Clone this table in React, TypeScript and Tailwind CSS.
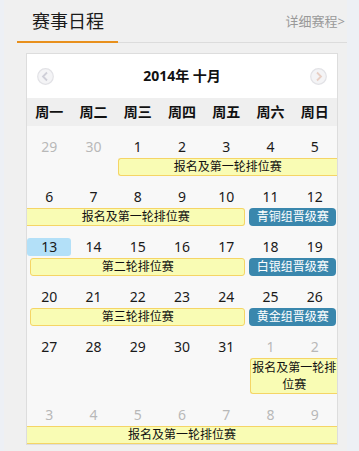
import React from 'react';

type Day = { n: number; other?: boolean; today?: boolean };
type Ev = { label: string; kind: 'yellow' | 'blue'; cls: string; tall?: boolean };

const weekdays = ['周一', '周二', '周三', '周四', '周五', '周六', '周日'];

const d = (n: number, other = false, today = false): Day => ({ n, other, today });

const weeks: { days: Day[]; events: Ev[] }[] = [
  {
    days: [d(29, true), d(30, true), d(1), d(2), d(3), d(4), d(5)],
    events: [
      { label: '报名及第一轮排位赛', kind: 'yellow', cls: 'col-start-3 col-span-5 ml-[2px] rounded-l-[3px] border-r-0' }
    ]
  },
  {
    days: [d(6), d(7), d(8), d(9), d(10), d(11), d(12)],
    events: [
      { label: '报名及第一轮排位赛', kind: 'yellow', cls: 'col-start-1 col-span-5 mr-[3px] rounded-r-[3px] border-l-0' },
      { label: '青铜组晋级赛', kind: 'blue', cls: 'col-start-6 col-span-2 ml-[1px] mr-[1px] rounded-[4px]' }
    ]
  },
  {
    days: [d(13, false, true), d(14), d(15), d(16), d(17), d(18), d(19)],
    events: [
      { label: '第二轮排位赛', kind: 'yellow', cls: 'col-start-1 col-span-5 ml-[3px] mr-[3px] rounded-[3px]' },
      { label: '白银组晋级赛', kind: 'blue', cls: 'col-start-6 col-span-2 ml-[1px] mr-[1px] rounded-[4px]' }
    ]
  },
  {
    days: [d(20), d(21), d(22), d(23), d(24), d(25), d(26)],
    events: [
      { label: '第三轮排位赛', kind: 'yellow', cls: 'col-start-1 col-span-5 ml-[3px] mr-[3px] rounded-[3px]' },
      { label: '黄金组晋级赛', kind: 'blue', cls: 'col-start-6 col-span-2 ml-[1px] mr-[1px] rounded-[4px]' }
    ]
  },
  {
    days: [d(27), d(28), d(29), d(30), d(31), d(1, true), d(2, true)],
    events: [
      { label: '报名及第一轮排位赛', kind: 'yellow', cls: 'col-start-6 col-span-2 ml-[2px] rounded-l-[3px] border-r-0', tall: true }
    ]
  },
  {
    days: [d(3, true), d(4, true), d(5, true), d(6, true), d(7, true), d(8, true), d(9, true)],
    events: [
      { label: '报名及第一轮排位赛', kind: 'yellow', cls: 'col-start-1 col-span-7 border-l-0 border-r-0' }
    ]
  }
];

function CircleArrow({ dir }: { dir: 'left' | 'right' }) {
  return (
    <svg width="17" height="17" viewBox="0 0 17 17">
      <circle cx="8.5" cy="8.5" r="7.8" fill="#f4f4f6" stroke="#e2e2e6" strokeWidth="1.2" />
      {dir === 'left' ? (
        <path d="M10 4.5 L6 8.5 L10 12.5" fill="none" stroke="#cfcfd8" strokeWidth="1.8" />
      ) : (
        <path d="M7 4.5 L11 8.5 L7 12.5" fill="none" stroke="#e8cfc4" strokeWidth="1.8" />
      )}
    </svg>
  );
}

export default function App() {
  return (
    <div
      className="h-[451px] w-[359px] overflow-hidden bg-[#edf0f5]"
      style={{ fontFamily: '"Noto Sans", "Noto Sans CJK SC", sans-serif' }}
    >
      <div className="ml-[4px] h-[451px] w-[343px] bg-[#f0f0f0]">
        <div className="ml-[13px] flex h-[43px] items-stretch justify-between border-b border-[#dcdcdc]">
          <div className="-mb-px flex w-[101px] items-center border-b-2 border-[#e8901c] pl-[15px] text-[18px] leading-[24px] text-[#1a1a1a]">
            赛事日程
          </div>
          <div className="flex items-center pr-[2px] text-[13px] leading-[18px] text-[#999]">详细赛程&gt;</div>
        </div>

        <div className="ml-[22px] mt-[10px] w-[312px] border border-[#dddddd]">
          <div className="flex h-[44px] items-center justify-between bg-white px-[10px]">
            <CircleArrow dir="left" />
            <div className="text-[14px] font-bold leading-[18px] text-[#111]">2014年 十月</div>
            <CircleArrow dir="right" />
          </div>

          <div className="grid h-[28px] grid-cols-7 items-center bg-[#efefef]">
            {weekdays.map((w) => (
              <div key={w} className="text-center text-[14px] font-bold leading-[18px] text-[#111]">
                {w}
              </div>
            ))}
          </div>

          <div className="bg-[#f8f8f8]">
            {weeks.map((week, i) => (
              <div key={i} className="pt-[12px]">
                <div className="grid grid-cols-7">
                  {week.days.map((day, j) => (
                    <div
                      key={j}
                      className={
                        'h-[18px] text-center text-[14px] leading-[18px] ' +
                        (day.today ? 'rounded-[3px] bg-[#b3e0f8] ' : '') +
                        (day.other ? 'text-[#b8b8b8]' : 'text-[#1a1a1a]')
                      }
                    >
                      {day.n}
                    </div>
                  ))}
                </div>
                <div className="mt-[2px] grid grid-cols-7">
                  {week.events.map((ev, k) => (
                    <div
                      key={k}
                      className={
                        'text-center text-[12px] ' +
                        (ev.tall ? 'h-[36px] leading-[17px] ' : ev.kind === 'yellow' ? 'h-[18px] leading-[16px] ' : 'h-[18px] leading-[18px] ') +
                        (ev.kind === 'yellow'
                          ? 'border border-[#f5d566] bg-[#f9fcb4] text-[#111] '
                          : 'bg-[#3a87ad] text-white ') +
                        ev.cls
                      }
                    >
                      {ev.label}
                    </div>
                  ))}
                </div>
              </div>
            ))}
          </div>
        </div>
      </div>
    </div>
  );
}
